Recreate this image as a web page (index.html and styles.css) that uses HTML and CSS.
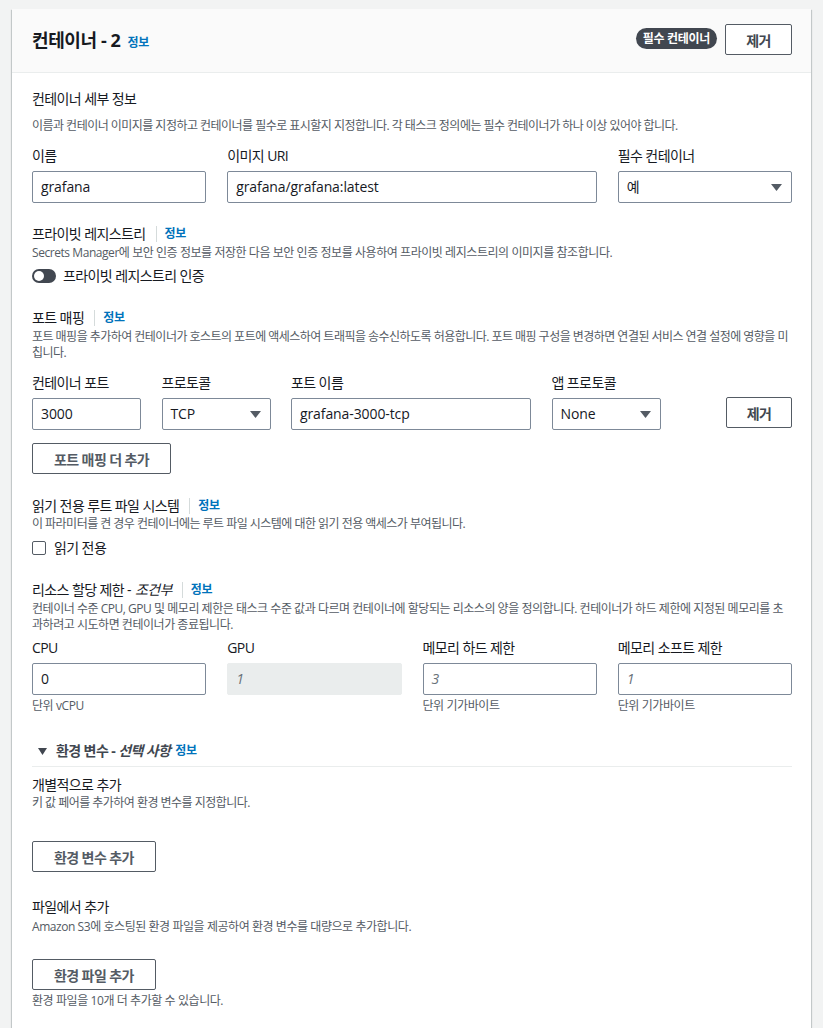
FILE: index.html
```html
<!DOCTYPE html>
<html lang="ko">
<head>
<meta charset="utf-8">
<title>컨테이너 - 2</title>
<link rel="stylesheet" href="styles.css">
</head>
<body>
<div class="page">
  <div class="card">
    <div class="card-header">
      <h2 class="title">컨테이너 - 2 <a class="info info-title">정보</a></h2>
      <div class="header-actions">
        <span class="badge">필수 컨테이너</span>
        <button class="btn btn-remove">제거</button>
      </div>
    </div>
    <div class="card-body">
      <section class="sec sec-first">
        <div class="sec-title">컨테이너 세부 정보</div>
        <div class="desc desc-first">이름과 컨테이너 이미지를 지정하고 컨테이너를 필수로 표시할지 지정합니다. 각 태스크 정의에는 필수 컨테이너가 하나 이상 있어야 합니다.</div>
        <div class="grid4 fields-a">
          <div class="field"><div class="label">이름</div><div class="input">grafana</div></div>
          <div class="field span2"><div class="label">이미지 URI</div><div class="input">grafana/grafana:latest</div></div>
          <div class="field"><div class="label">필수 컨테이너</div><div class="input select"><span>예</span><svg class="caret" width="11" height="7" viewBox="0 0 11 7"><path d="M0 0h11L5.5 7z" fill="#545b64"/></svg></div></div>
        </div>
      </section>

      <section class="sec">
        <div class="sec-title">프라이빗 레지스트리<span class="sep"></span><a class="info">정보</a></div>
        <div class="desc desc-latin">Secrets Manager에 보안 인증 정보를 저장한 다음 보안 인증 정보를 사용하여 프라이빗 레지스트리의 이미지를 참조합니다.</div>
        <div class="toggle-row"><span class="toggle"><span class="knob"></span></span><span>프라이빗 레지스트리 인증</span></div>
      </section>

      <section class="sec">
        <div class="sec-title">포트 매핑<span class="sep"></span><a class="info">정보</a></div>
        <div class="desc">포트 매핑을 추가하여 컨테이너가 호스트의 포트에 액세스하여 트래픽을 송수신하도록 허용합니다. 포트 매핑 구성을 변경하면 연결된 서비스 연결 설정에 영향을 미칩니다.</div>
        <div class="port-grid">
          <div class="field"><div class="label">컨테이너 포트</div><div class="input">3000</div></div>
          <div class="field"><div class="label">프로토콜</div><div class="input select"><span>TCP</span><svg class="caret" width="11" height="7" viewBox="0 0 11 7"><path d="M0 0h11L5.5 7z" fill="#545b64"/></svg></div></div>
          <div class="field"><div class="label">포트 이름</div><div class="input">grafana-3000-tcp</div></div>
          <div class="field"><div class="label">앱 프로토콜</div><div class="input select"><span>None</span><svg class="caret" width="11" height="7" viewBox="0 0 11 7"><path d="M0 0h11L5.5 7z" fill="#545b64"/></svg></div></div>
          <button class="btn btn-remove btn-port-remove">제거</button>
        </div>
        <button class="btn btn-add btn-port-add">포트 매핑 더 추가</button>
      </section>

      <section class="sec">
        <div class="sec-title">읽기 전용 루트 파일 시스템<span class="sep"></span><a class="info">정보</a></div>
        <div class="desc desc-tight">이 파라미터를 켠 경우 컨테이너에는 루트 파일 시스템에 대한 읽기 전용 액세스가 부여됩니다.</div>
        <div class="check-row"><span class="checkbox"></span><span>읽기 전용</span></div>
      </section>

      <section class="sec">
        <div class="sec-title">리소스 할당 제한 - <em>조건부</em><span class="sep"></span><a class="info">정보</a></div>
        <div class="desc desc-res">컨테이너 수준 CPU, GPU 및 메모리 제한은 태스크 수준 값과 다르며 컨테이너에 할당되는 리소스의 양을 정의합니다. 컨테이너가 하드 제한에 지정된 메모리를 초과하려고 시도하면 컨테이너가 종료됩니다.</div>
        <div class="grid4 fields-r">
          <div class="field"><div class="label">CPU</div><div class="input">0</div><div class="hint">단위 vCPU</div></div>
          <div class="field"><div class="label">GPU</div><div class="input disabled"><span class="ph">1</span></div></div>
          <div class="field"><div class="label">메모리 하드 제한</div><div class="input"><span class="ph">3</span></div><div class="hint">단위 기가바이트</div></div>
          <div class="field"><div class="label">메모리 소프트 제한</div><div class="input"><span class="ph">1</span></div><div class="hint">단위 기가바이트</div></div>
        </div>
      </section>

      <section class="sec env">
        <div class="env-header">
          <svg class="env-caret" width="9" height="7" viewBox="0 0 9 7"><path d="M0 0h9L4.5 7z" fill="#414750"/></svg>
          <span class="env-title">환경 변수 - <em>선택 사항</em></span>
          <a class="info">정보</a>
        </div>
        <div class="sub sub-first">
          <div class="sec-title">개별적으로 추가</div>
          <div class="desc desc-tight">키 값 페어를 추가하여 환경 변수를 지정합니다.</div>
          <button class="btn btn-add btn-env">환경 변수 추가</button>
        </div>
        <div class="sub sub-second">
          <div class="sec-title">파일에서 추가</div>
          <div class="desc desc-two desc-latin">Amazon S3에 호스팅된 환경 파일을 제공하여 환경 변수를 대량으로 추가합니다.</div>
          <button class="btn btn-add btn-file">환경 파일 추가</button>
          <div class="hint hint-note">환경 파일을 10개 더 추가할 수 있습니다.</div>
        </div>
      </section>
    </div>
  </div>
</div>
</body>
</html>
```

FILE: styles.css
```css
* { box-sizing: border-box; }

html, body {
  margin: 0;
  padding: 0;
}

body {
  background: #f2f3f3;
  font-family: "Open Sans", "Noto Sans CJK KR", sans-serif;
  color: #16191f;
  font-size: 14px;
  line-height: 20px;
  letter-spacing: -0.6px;
}

.page {
  height: 1028px;
  overflow: hidden;
  padding: 9px 12px 0 12px;
}

.card {
  background: #ffffff;
  min-height: 1040px;
  box-shadow: 0 1px 1px 0 rgba(0, 28, 36, 0.3), 1px 1px 1px 0 rgba(0, 28, 36, 0.15), -1px 1px 1px 0 rgba(0, 28, 36, 0.15);
}

.card-header {
  height: 64px;
  background: #fafafa;
  border-bottom: 1px solid #eaeded;
  display: flex;
  align-items: center;
  justify-content: space-between;
  padding: 0 19px 2px 20px;
}

.title {
  margin: 0;
  font-size: 18px;
  font-weight: 700;
  line-height: 24px;
  letter-spacing: -0.4px;
  display: flex;
  align-items: baseline;
}

.info {
  color: #0073bb;
  font-size: 12px;
  font-weight: 700;
  line-height: 16px;
  letter-spacing: -0.3px;
}

.info-title {
  margin-left: 7px;
}

.header-actions {
  display: flex;
  align-items: center;
  gap: 8px;
}

.badge {
  background: #414750;
  color: #ffffff;
  font-size: 12px;
  font-weight: 700;
  line-height: 21px;
  height: 21px;
  padding: 0 7px;
  border-radius: 11px;
  margin-bottom: 2px;
  letter-spacing: -0.3px;
}

.btn {
  font-family: inherit;
  background: #ffffff;
  border: 1px solid #545b64;
  border-radius: 2px;
  color: #545b64;
  font-size: 14px;
  font-weight: 700;
  height: 31px;
  padding: 0 21px;
  letter-spacing: -0.6px;
  cursor: pointer;
}

.btn-remove {
  width: 67px;
  padding: 0;
  color: #414750;
}

.card-body {
  padding: 16px 19px 40px 20px;
}

.sec-title {
  font-size: 14px;
  line-height: 20px;
  display: flex;
  align-items: center;
}

.sec-title em {
  margin-left: 4px;
}

.sep {
  display: inline-block;
  width: 1px;
  height: 16px;
  background: #d5dbdb;
  margin: 0 8px 0 10px;
}

.desc {
  font-size: 12px;
  line-height: 16px;
  color: #545b64;
  margin-top: 1px;
  letter-spacing: -0.53px;
}

.desc-latin { letter-spacing: -0.44px; }
.desc-res { letter-spacing: -0.47px; }

.desc-first { margin-top: 9px; }
.desc-tight { margin-top: 0; }
.desc-two { margin-top: 2px; }

.sec { margin-top: 21px; }
.sec-first { margin-top: 0; }
.sec + .sec { margin-top: 22px; }
.sec-first + .sec { margin-top: 21px; }

.grid4 {
  display: grid;
  grid-template-columns: repeat(4, 1fr);
  column-gap: 21px;
}

.span2 { grid-column: span 2; }

.fields-a { margin-top: 12px; }
.fields-r { margin-top: 5px; }

.label {
  font-size: 14px;
  line-height: 20px;
  margin-bottom: 5px;
}

.input {
  height: 32px;
  border: 1px solid #7d8998;
  border-radius: 2px;
  padding: 0 9px 0 8px;
  display: flex;
  align-items: center;
  font-size: 14px;
  color: #16191f;
  background: #ffffff;
  letter-spacing: -0.1px;
}

.select {
  justify-content: space-between;
}

.caret { flex: none; }

.input.disabled {
  background: #eaeded;
  border-color: #eaeded;
}

.ph {
  font-style: italic;
  color: #687078;
}

.hint {
  font-size: 12px;
  line-height: 16px;
  color: #545b64;
  margin-top: 3px;
  letter-spacing: -0.42px;
}

.toggle-row, .check-row {
  display: flex;
  align-items: center;
  height: 20px;
  margin-top: 5px;
}

.check-row { margin-top: 6px; }

.toggle {
  width: 24px;
  height: 14px;
  border-radius: 7px;
  background: #414750;
  position: relative;
  margin-right: 7px;
  flex: none;
}

.knob {
  position: absolute;
  left: 2px;
  top: 2px;
  width: 10px;
  height: 10px;
  border-radius: 50%;
  background: #ffffff;
}

.checkbox {
  width: 14px;
  height: 14px;
  border: 1px solid #545b64;
  border-radius: 2px;
  margin-right: 8px;
  flex: none;
}

.port-grid {
  display: grid;
  grid-template-columns: 109px 109px 240px 109px 1fr;
  column-gap: 20.5px;
  margin-top: 12px;
  align-items: end;
}

.btn-port-remove {
  justify-self: end;
  margin-bottom: 2px;
  width: 66px;
}

.btn-port-add {
  margin-top: 13px;
  display: block;
}

.env { margin-top: 27px !important; }

.env-header {
  display: flex;
  align-items: center;
  height: 20px;
  box-sizing: content-box;
  padding-bottom: 5px;
  border-bottom: 1px solid #eaeded;
  font-weight: 700;
  color: #414750;
}

.env-caret {
  margin-left: 6px;
  margin-right: 9px;
}

.env-title {
  margin-right: 5px;
}

.env-title em { font-weight: 700; }

.sub-first { margin-top: 8px; }
.sub-second { margin-top: 25px; }

.btn-env, .btn-file {
  display: block;
  margin-top: 30px;
}

.btn-file { margin-top: 24px; }

.hint-note { margin-top: 3px; }
```
